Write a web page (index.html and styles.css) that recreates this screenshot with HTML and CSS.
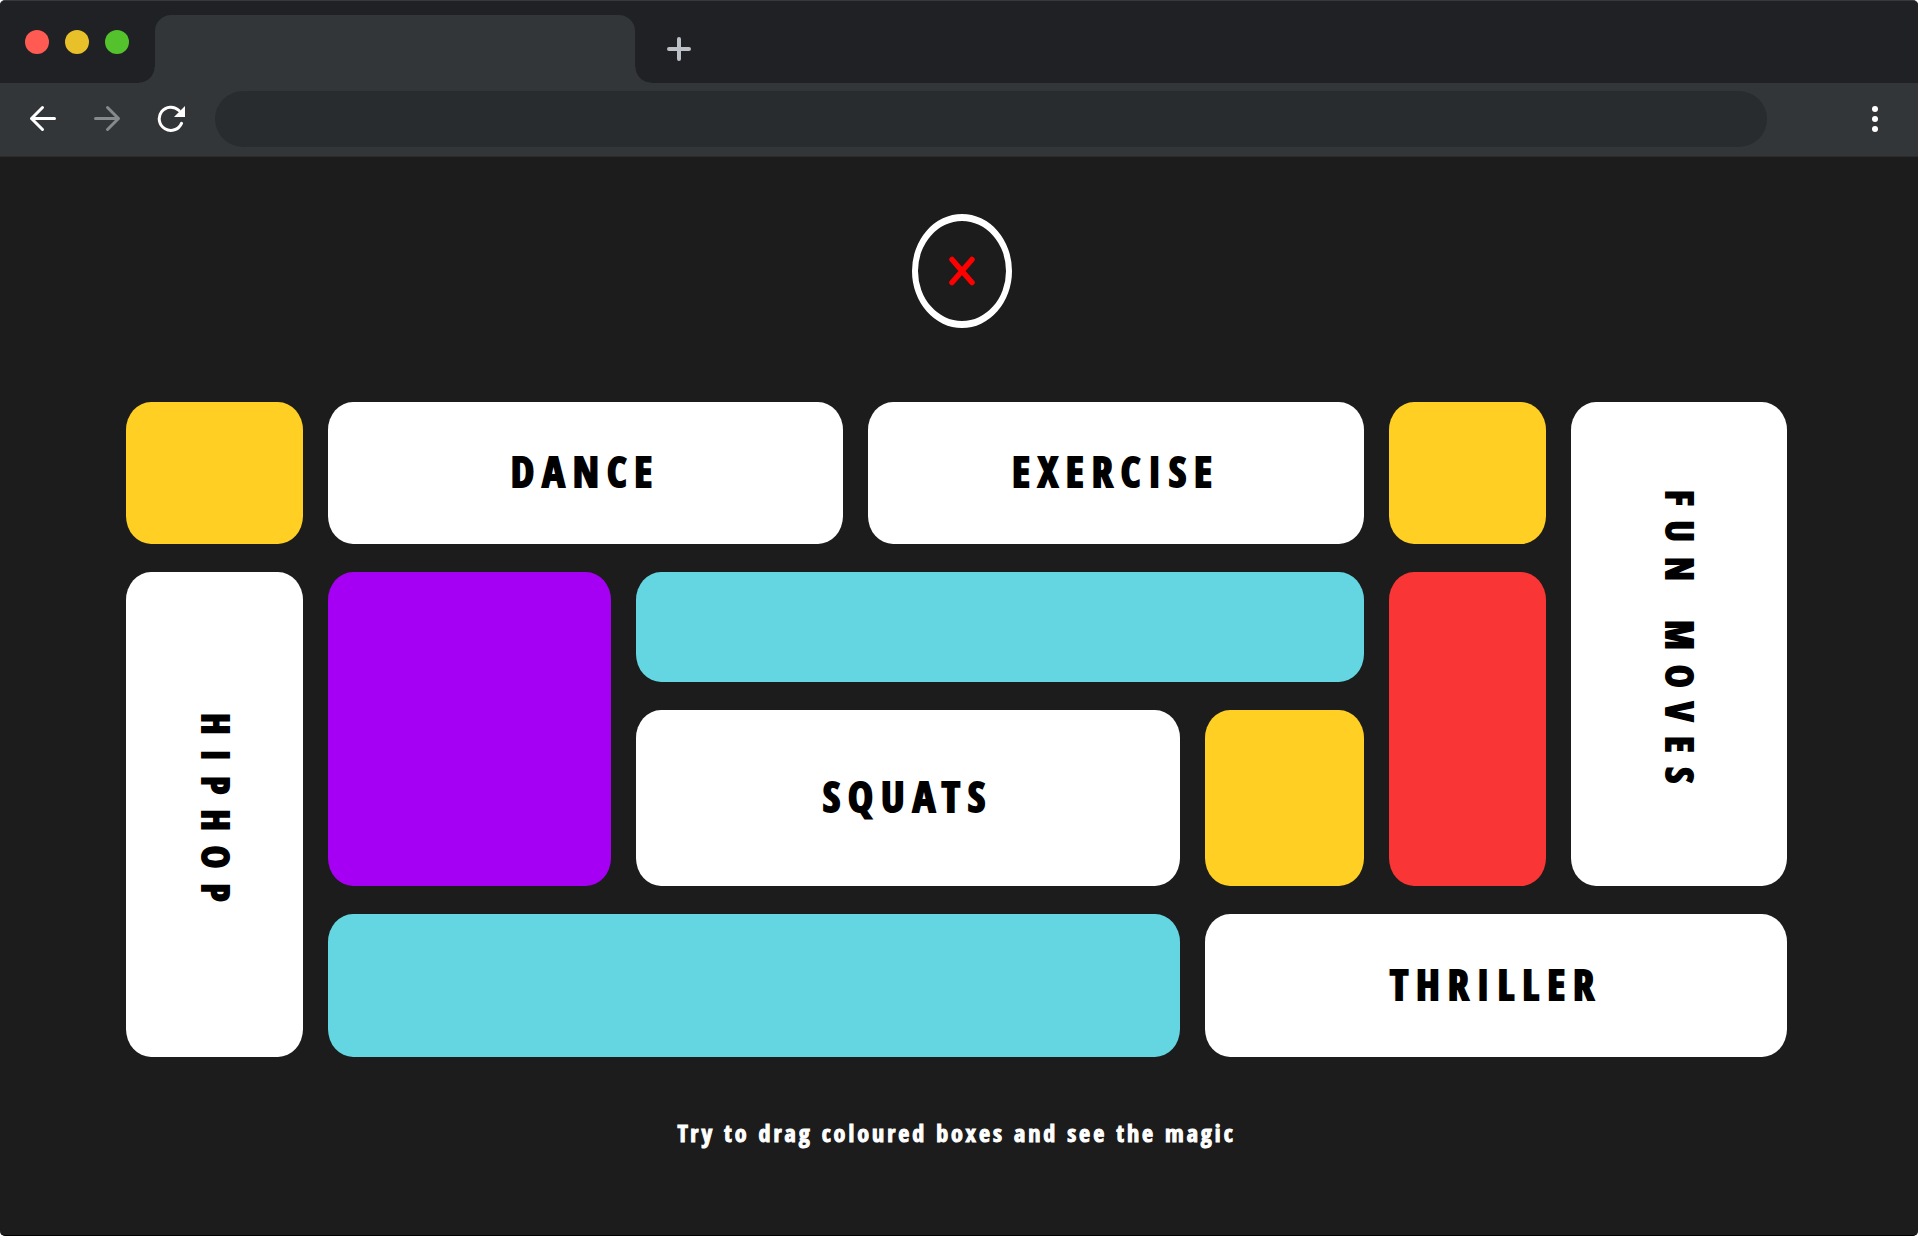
FILE: index.html
```html
<!DOCTYPE html>
<html lang="en">
<head>
<meta charset="utf-8">
<title>Dance board</title>
<meta name="viewport" content="width=device-width, initial-scale=1">
<link rel="stylesheet" href="styles.css">
</head>
<body>
<div class="window">
  <header class="chrome">
    <div class="tab-strip">
      <div class="lights">
        <button class="light light-close" aria-label="Close"></button>
        <button class="light light-minimise" aria-label="Minimise"></button>
        <button class="light light-zoom" aria-label="Zoom"></button>
      </div>
      <div class="tab"></div>
      <button class="icon-button new-tab" aria-label="New tab">
        <svg width="24" height="24" viewBox="0 0 24 24" fill="none" stroke="#bdc0c6" stroke-width="4" stroke-linecap="round"><path d="M12 2v20M2 12h20"/></svg>
      </button>
    </div>
    <div class="toolbar">
      <nav class="nav-buttons">
        <button class="icon-button" aria-label="Back">
          <svg width="28" height="28" viewBox="0 0 28 28" fill="none" stroke="#fff" stroke-width="3" stroke-linecap="round" stroke-linejoin="round"><path d="M25.500 13.500H2.500M13.500 2.500l-11 11 11 11"/></svg>
        </button>
        <button class="icon-button" aria-label="Forward">
          <svg width="28" height="28" viewBox="0 0 28 28" fill="none" stroke="#868a8c" stroke-width="3" stroke-linecap="round" stroke-linejoin="round"><path d="M2.500 13.500h23M14.500 2.500l11 11-11 11"/></svg>
        </button>
        <button class="icon-button" aria-label="Reload">
          <svg width="28" height="28" viewBox="0 0 28 28" fill="none"><path d="M24.500 18.300A11.600 11.600 0 1 1 22 5.500" stroke="#fff" stroke-width="3" stroke-linecap="round"/><path d="M28 1v11H17z" fill="#fff"/></svg>
        </button>
      </nav>
      <input class="address" type="text" aria-label="Address">
      <button class="icon-button menu" aria-label="Menu">
        <svg width="6" height="26" viewBox="0 0 6 26" fill="#fff"><circle cx="3" cy="3" r="3"/><circle cx="3" cy="13" r="3"/><circle cx="3" cy="23" r="3"/></svg>
      </button>
    </div>
  </header>

  <main class="page">
    <button class="icon-button target" aria-label="Close board">
      <svg width="100" height="114" viewBox="0 0 100 114" fill="none">
        <path fill="#fff" fill-rule="evenodd" d="M0 57a50 57 0 1 0 100 0a50 57 0 1 0-100 0zM6 57a44 50 0 1 0 88 0a44 50 0 1 0-88 0z"/>
        <path d="M40 45.500l20 23M60 45.500l-20 23" stroke="#f00" stroke-width="5.500" stroke-linecap="round"/>
      </svg>
    </button>

    <section class="board" aria-label="Moves">
      <div class="tile yellow corner" draggable="true"></div>
      <div class="tile dance">DANCE</div>
      <div class="tile exercise">EXERCISE</div>
      <div class="tile yellow top" draggable="true"></div>
      <div class="tile tall fun">FUN MOVES</div>
      <div class="tile tall hiphop">HIPHOP</div>
      <div class="tile purple" draggable="true"></div>
      <div class="tile teal bar" draggable="true"></div>
      <div class="tile red" draggable="true"></div>
      <div class="tile squats">SQUATS</div>
      <div class="tile yellow middle" draggable="true"></div>
      <div class="tile teal base" draggable="true"></div>
      <div class="tile thriller">THRILLER</div>
    </section>

    <p class="hint">Try to drag coloured boxes and see the magic</p>
  </main>
</div>
</body>
</html>
```

FILE: styles.css
```css
* {
  box-sizing: border-box;
}

body {
  margin: 0;
  background: #fff;
  font-family: "Open Sans Condensed", "Roboto Condensed", "DejaVu Sans Condensed", sans-serif;
}

.window {
  display: flex;
  flex-direction: column;
  min-height: 100vh;
  overflow: hidden;
  border-radius: 5px;
  background: #1c1c1c;
  border-top: 1px solid #37393d;
  border-bottom: 1px solid #000;
}

.icon-button {
  display: flex;
  padding: 0;
  border: 0;
  background: none;
}

/* Browser chrome */
.tab-strip {
  display: flex;
  height: 82px;
  padding: 14px 0 0 25px;
  background: #202125;
}

.lights {
  display: flex;
  gap: 16px;
  width: 130px;
  padding-top: 15px;
}

.light {
  width: 24px;
  height: 24px;
  padding: 0;
  border: 0;
  border-radius: 50%;
}

.light-close { background: #ff5b53; }
.light-minimise { background: #e7c02a; }
.light-zoom { background: #54c22c; }

.tab {
  position: relative;
  width: 480px;
  border-radius: 16px 16px 0 0;
  background: #323639;
}

/* Flared feet where the tab meets the toolbar */
.tab::before,
.tab::after {
  content: "";
  position: absolute;
  bottom: 0;
  width: 16px;
  height: 16px;
}

.tab::before {
  right: 100%;
  background: radial-gradient(circle at 0 0, #202125 15px, #323639 16px);
}

.tab::after {
  left: 100%;
  background: radial-gradient(circle at 100% 0, #202125 15px, #323639 16px);
}

.new-tab {
  align-self: flex-start;
  margin: 22px 0 0 32px;
}

.toolbar {
  display: flex;
  align-items: center;
  height: 74px;
  padding: 0 40px 2px 29px;
  background: #323639;
  border-bottom: 1px solid #2a2c2e;
}

.nav-buttons {
  display: flex;
  gap: 36px;
}

.address {
  flex: 1;
  min-width: 0;
  height: 56px;
  margin: 0 105px 0 30px;
  padding: 0 28px;
  border: 0;
  border-radius: 28px;
  background: #282c2f;
  color: #fff;
  font-size: 24px;
}

/* Page */
.page {
  display: flex;
  flex-direction: column;
  padding: 57px 131px 80px 126px;
}

.target {
  align-self: center;
  margin: 0 0 74px 10px;
}

.board {
  display: grid;
  grid-template-columns: 177fr 283fr 207fr 312fr 159fr 157fr 216fr;
  grid-template-rows: 142px 110px 176px 143px;
  grid-template-areas:
    "corner dance  dance  exercise exercise top fun"
    "hiphop purple bar    bar      bar      red fun"
    "hiphop purple squats squats   middle   red fun"
    "hiphop base   base   base     thriller thriller thriller";
  gap: 28px 25px;
}

.tile {
  display: flex;
  align-items: center;
  justify-content: center;
  min-width: 0;
  padding-bottom: 5px;
  border-radius: 25px / 28px;
  background: #fff;
  color: #000;
  font-size: 42px;
  font-weight: bold;
  letter-spacing: 8px;
  -webkit-text-stroke: 2px #000;
}

.tall {
  padding: 0 0 0 4px;
  writing-mode: vertical-rl;
  font-size: 38px;
  letter-spacing: 15px;
}

.yellow { background: #ffcf24; }
.purple { background: #a500f3; }
.teal { background: #64d6e1; }
.red { background: #f93535; }

.corner { grid-area: corner; }
.dance { grid-area: dance; }
.exercise { grid-area: exercise; }
.top { grid-area: top; }
.fun { grid-area: fun; }
.hiphop { grid-area: hiphop; }
.purple { grid-area: purple; }
.bar { grid-area: bar; }
.red { grid-area: red; }
.squats { grid-area: squats; }
.middle { grid-area: middle; }
.base { grid-area: base; }
.thriller { grid-area: thriller; }

.hint {
  margin: 61px 0 0;
  color: #fff;
  font-size: 24px;
  font-weight: bold;
  line-height: 30px;
  letter-spacing: 3px;
  text-align: center;
  -webkit-text-stroke: 1px #fff;
}
```
